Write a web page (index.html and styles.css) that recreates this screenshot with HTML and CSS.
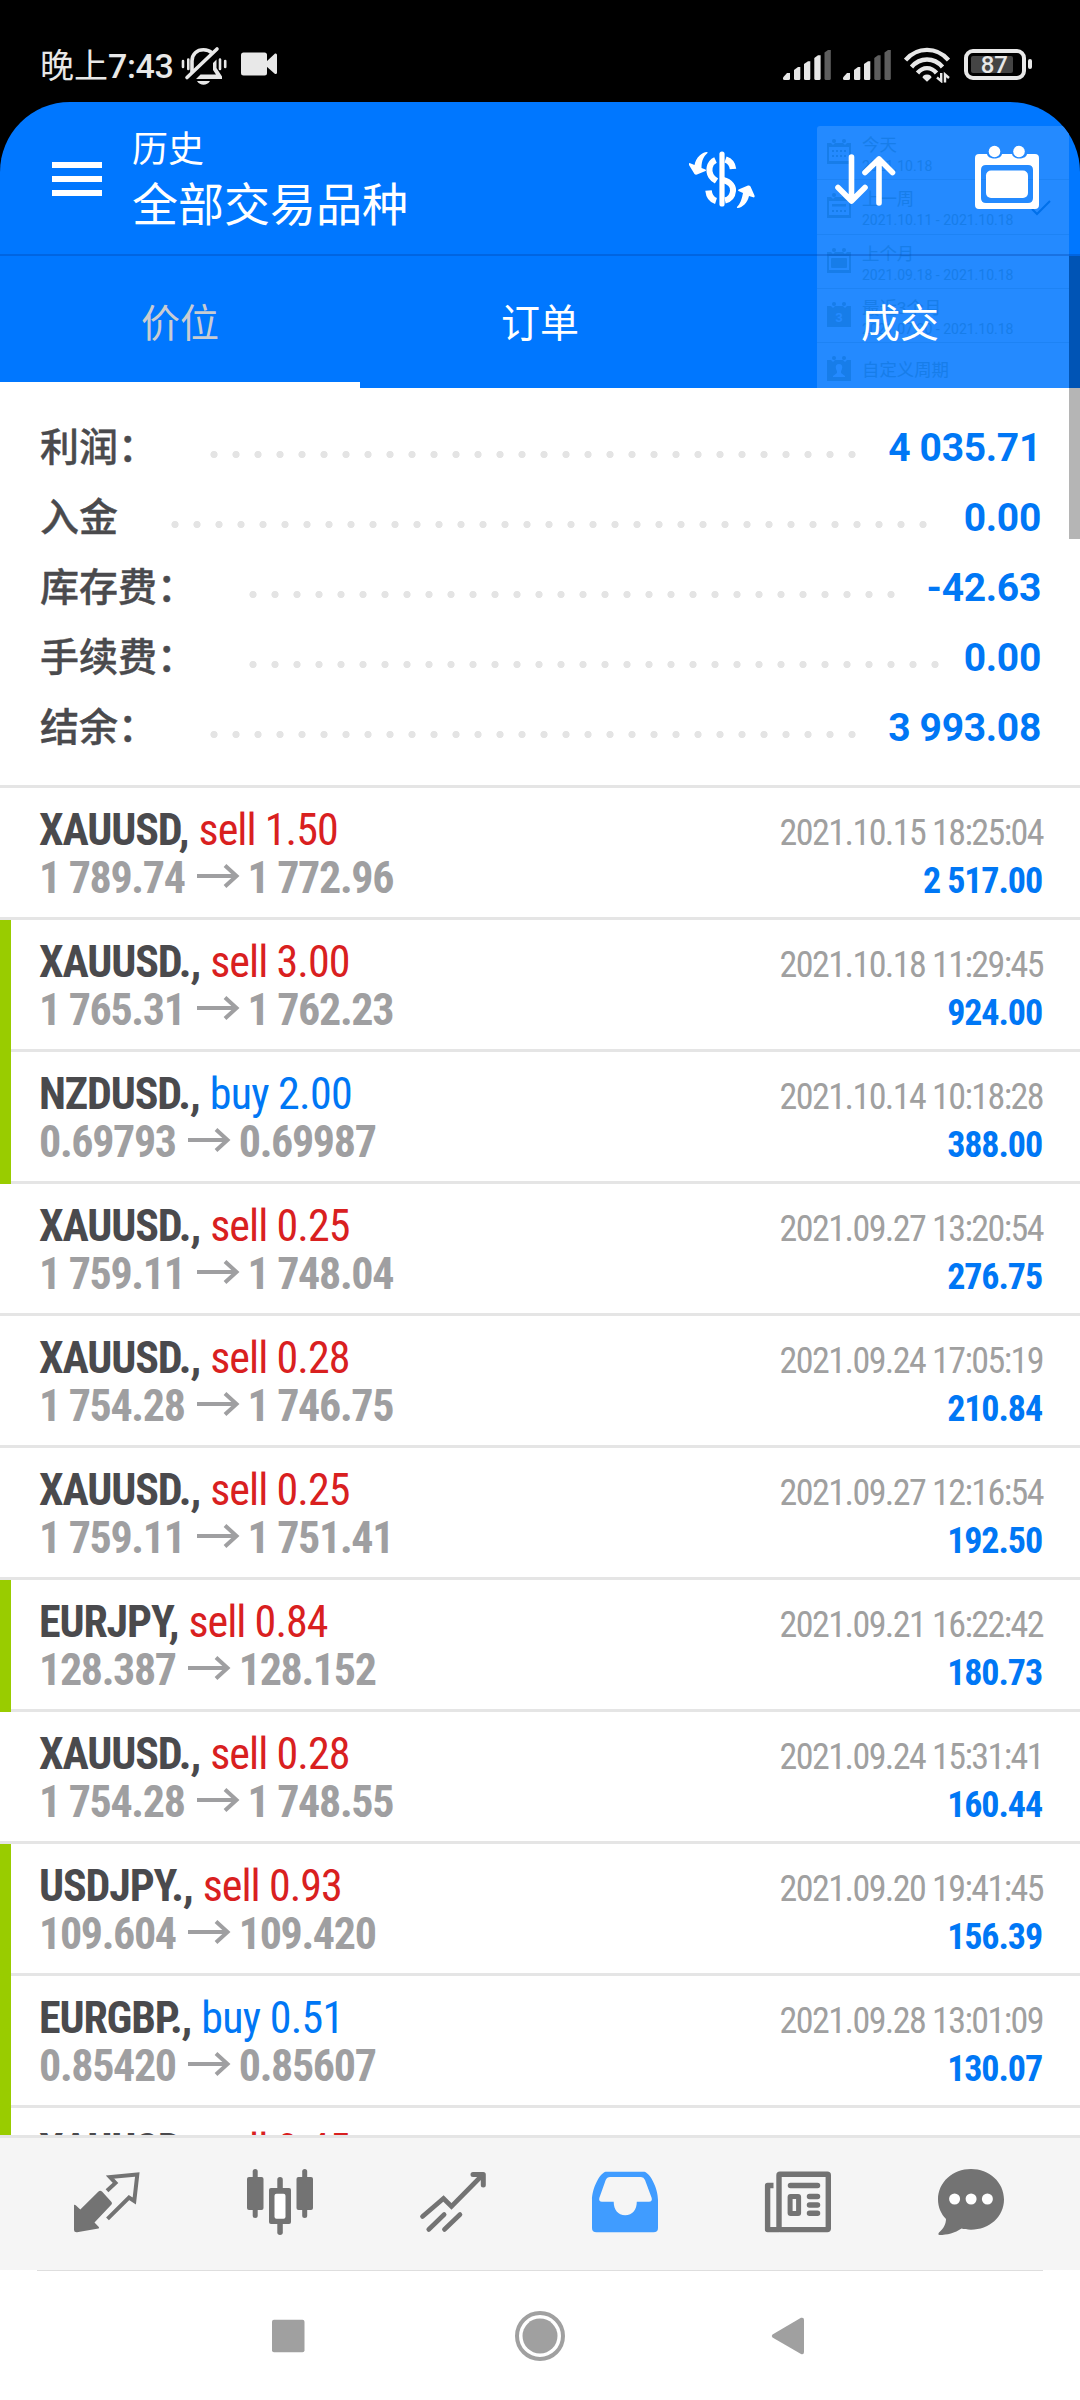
FILE: index.html
```html
<!DOCTYPE html>
<html lang="zh-CN">
<head>
<meta charset="utf-8">
<title>历史</title>
<link rel="stylesheet" href="styles.css">
</head>
<body>
<div class="screen">
  <div class="status-bar">
    <div class="status-left">
      <span class="clock"><span class="daypart">晚上</span>7:43</span>
      <svg class="bell" width="46" height="40" viewBox="0 0 46 40" fill="none" stroke="#e8e8e8">
        <path d="M11 26V15C11 8 16 3.800 22.500 3.800C26.500 3.800 29 5 31 7" stroke-width="3.600"/>
        <path d="M6 31.500L36 3" stroke-width="3.600" stroke-linecap="round"/>
        <path d="M32 17L35.500 13.500V22L41 30.500V33H15L19.500 28.500H35L32 24Z" fill="#e8e8e8" stroke="none"/>
        <path d="M16 35H29C27.500 37.500 25 38.800 22.500 38.800C20 38.800 17.500 37.500 16 35Z" fill="#e8e8e8" stroke="none"/>
        <path d="M2 15V21M7.300 13.500V23M39 13.500V23M44.200 15V21" stroke-width="2.600" stroke-linecap="round"/>
      </svg>
      <svg class="video" width="36" height="24" viewBox="0 0 36 24" fill="#e8e8e8">
        <rect x="0" y="0.500" width="26" height="23" rx="2.500"/>
        <path d="M25 10L34 1.500Q36 1 36 3V20.500Q36 22.500 34 22L25 14Z"/>
      </svg>
    </div>
    <div class="status-right">
      <svg width="48" height="32" viewBox="0 0 48 32" fill="#e8e8e8">
        <path d="M0 28.500L4 24H7V29.500Q7 31 5.500 31H1.500Q0 31 0 29.500Z"/>
        <path d="M11 21L15 18H17.300V29.500Q17.300 31 16 31H12.500Q11 31 11 29.500Z"/>
        <path d="M21 15L25 12.300H27.300V29.500Q27.300 31 26 31H22.500Q21 31 21 29.500Z"/>
        <path d="M31.300 9L35 6.300H37.600V29.500Q37.600 31 36 31H32.800Q31.300 31 31.300 29.500Z"/>
        <path fill="#5e5e5e" d="M41.500 3.500L45 1H47.800V29.500Q47.800 31 46.300 31H43Q41.500 31 41.500 29.500Z"/>
      </svg>
      <svg class="sim2" width="48" height="32" viewBox="0 0 48 32" fill="#e8e8e8">
        <path d="M0 28.500L4 24H7V29.500Q7 31 5.500 31H1.500Q0 31 0 29.500Z"/>
        <path d="M11 21L15 18H17.300V29.500Q17.300 31 16 31H12.500Q11 31 11 29.500Z"/>
        <path d="M21 15L25 12.300H27.300V29.500Q27.300 31 26 31H22.500Q21 31 21 29.500Z"/>
        <path fill="#5e5e5e" d="M31.300 9L35 6.300H37.600V29.500Q37.600 31 36 31H32.800Q31.300 31 31.300 29.500Z"/>
        <path fill="#5e5e5e" d="M41.500 3.500L45 1H47.800V29.500Q47.800 31 46.300 31H43Q41.500 31 41.500 29.500Z"/>
      </svg>
      <svg class="wifi" width="46" height="36" viewBox="0 0 46 36" fill="none" stroke="#e8e8e8" stroke-width="4.400">
        <path d="M1.500 13C13.500 -0.500 32.500 -0.500 44.500 13"/>
        <path d="M7.500 20C16 10 30 10 38.500 20"/>
        <path d="M13.500 26C19 19.500 27 19.500 32.500 26"/>
        <path d="M23 27.500C26 27.500 27.500 29 27.500 30.500L23 34.800L18.500 30.500C18.500 29 20 27.500 23 27.500Z" fill="#e8e8e8" stroke="none"/>
        <path d="M37.200 26V34L33 30.500M41 35.500V27.500L45 31" stroke-width="2.400"/>
      </svg>
      <div class="battery"><span class="charge">87</span></div>
      <div class="battery-tip"></div>
    </div>
  </div>

  <header class="app-header">
    <div class="title-bar">
      <svg class="menu" width="50" height="34" viewBox="0 0 50 34" fill="#fff"><path d="M0 0H50V6H0ZM0 14H50V20H0ZM0 28H50V34H0Z"/></svg>
      <div class="titles">
        <div class="title-small">历史</div>
        <div class="title-large">全部交易品种</div>
      </div>
      <svg class="ic-dollar" width="68" height="60" viewBox="0 0 68 60" fill="none" stroke="#fff">
        <path d="M33 4V54" stroke-width="5.200" stroke-linecap="round"/>
        <path d="M26.500 10C20 13 19 21 22 26C24 29 26 30 27.500 31" stroke-width="6"/>
        <path d="M36.500 9.500C41 11 43.500 14 44 19" stroke-width="6.500"/>
        <path d="M34 30C42 32 44.500 37 44 41C43.500 46 40.500 49.500 36 50.500" stroke-width="6"/>
        <path d="M27 51C22 49.500 20 45 19.500 40.500" stroke-width="6.500"/>
        <path fill="#fff" stroke="none" d="M18 2C13 2.500 7 7 5.500 15L0.500 13Q-0.500 13.500 0 15L5.500 24Q6.500 25 8 24.500L16.500 21Q17.500 20.500 16.500 19.500L12.500 18C12.500 10 15 6 18.500 3Q19 2 18 2Z"/>
        <path fill="#fff" stroke="none" d="M48.500 58C53.500 57.500 58.500 53 60 46L65 47.500Q66 47 65.500 45.500L61.500 36.500Q60.500 35 59 35.500L49.500 39.500Q48.500 40.500 49.500 41L54 43C53 49 51 54 48 57Q47.500 58 48.500 58Z"/>
      </svg>
      <svg class="ic-sort" width="62" height="54" viewBox="0 0 62 54" fill="none" stroke="#fff" stroke-width="5.600" stroke-linecap="round" stroke-linejoin="round">
        <path d="M17.500 4V48M4 34.500L17.500 48L31 34.500M45 50V6M31 19.500L45 6L58.500 19.500"/>
      </svg>
      <svg class="ic-cal" width="64" height="66" viewBox="0 0 64 66" fill="#fff">
        <path fill-rule="evenodd" d="M4 9H12C13 15 26 15 27 9H37C38 15 51 15 52 9H60Q64 9 64 13V60Q64 64 60 64H4Q0 64 0 60V13Q0 9 4 9ZM11 20Q6 20 6 25V53Q6 58 11 58H53Q58 58 58 53V25Q58 20 53 20Z"/>
        <circle cx="19.500" cy="6.500" r="5.800"/><circle cx="44" cy="6.500" r="5.800"/>
        <rect x="11" y="25.500" width="42" height="27.500" rx="5"/>
      </svg>
    </div>
    <nav class="tabs">
      <div class="tab active">价位</div>
      <div class="tab">订单</div>
      <div class="tab">成交</div>
    </nav>
    <div class="period-menu">
      <div class="period">
        <svg width="26" height="26" viewBox="0 0 26 26"><path fill-rule="evenodd" d="M1 4H5L7 6L9 4H17L19 6L21 4H25V25H1ZM3 8V22H23V8Z"/><circle cx="8" cy="2" r="2"/><circle cx="18" cy="2" r="2"/><path fill="none" stroke="currentColor" stroke-width="2" stroke-dasharray="2 2" d="M6 12H21M6 17H21"/></svg>
        <div><b>今天</b><i>2021.10.18</i></div>
      </div>
      <div class="period">
        <svg width="26" height="26" viewBox="0 0 26 26"><path fill-rule="evenodd" d="M1 4H5L7 6L9 4H17L19 6L21 4H25V25H1ZM3 8V22H23V8Z"/><circle cx="8" cy="2" r="2"/><circle cx="18" cy="2" r="2"/><path d="M6 11H20V13.500H6Z"/><path fill="none" stroke="currentColor" stroke-width="2" stroke-dasharray="2 2" d="M6 18H21"/></svg>
        <div><b>上一周</b><i>2021.10.11 - 2021.10.18</i></div>
        <svg class="tick" width="20" height="16" viewBox="0 0 20 16"><path fill="none" stroke="#0070ea" stroke-width="2" d="M1 9L6 14L19 1"/></svg>
      </div>
      <div class="period">
        <svg width="26" height="26" viewBox="0 0 26 26"><path fill-rule="evenodd" d="M1 4H5L7 6L9 4H17L19 6L21 4H25V25H1ZM3 8V22H23V8Z"/><circle cx="8" cy="2" r="2"/><circle cx="18" cy="2" r="2"/><rect x="5" y="10" width="16" height="10" rx="1"/></svg>
        <div><b>上个月</b><i>2021.09.18 - 2021.10.18</i></div>
      </div>
      <div class="period">
        <svg width="26" height="26" viewBox="0 0 26 26"><path d="M1 4H5L7 6L9 4H17L19 6L21 4H25V25H1Z"/><circle cx="8" cy="2" r="2"/><circle cx="18" cy="2" r="2"/><text x="13" y="20" text-anchor="middle" class="cal-num">3</text></svg>
        <div><b>最近3个月</b><i>2021.07.20 - 2021.10.18</i></div>
      </div>
      <div class="period single">
        <svg width="26" height="26" viewBox="0 0 26 26"><path d="M1 4H5L7 6L9 4H17L19 6L21 4H25V25H1Z"/><circle cx="8" cy="2" r="2"/><circle cx="18" cy="2" r="2"/><path fill="#248aff" d="M13 8C18 8 16 14 15 15V17L19 20V21H7V20L11 17V15C10 14 8 8 13 8Z"/></svg>
        <div><b>自定义周期</b></div>
      </div>
    </div>
  </header>

  <section class="summary">
    <div class="sum-row"><span class="label">利润：</span><span class="dots" style="width:660px"></span><span class="value">4 035.71</span></div>
    <div class="sum-row"><span class="label">入金</span><span class="dots" style="width:770px"></span><span class="value">0.00</span></div>
    <div class="sum-row"><span class="label">库存费：</span><span class="dots" style="width:660px"></span><span class="value">-42.63</span></div>
    <div class="sum-row"><span class="label">手续费：</span><span class="dots" style="width:704px"></span><span class="value">0.00</span></div>
    <div class="sum-row"><span class="label">结余：</span><span class="dots" style="width:660px"></span><span class="value">3 993.08</span></div>
  </section>

  <main class="deals">
    <article class="deal"><div class="line"><p><b class="sym">XAUUSD,</b> <span class="sell">sell 1.50</span></p><time>2021.10.15 18:25:04</time></div><div class="line"><p class="price">1 789.74<svg class="arrow"><use href="#arrow"/></svg>1 772.96</p><b class="profit">2 517.00</b></div></article>
    <article class="deal marked"><div class="line"><p><b class="sym">XAUUSD.,</b> <span class="sell">sell 3.00</span></p><time>2021.10.18 11:29:45</time></div><div class="line"><p class="price">1 765.31<svg class="arrow"><use href="#arrow"/></svg>1 762.23</p><b class="profit">924.00</b></div></article>
    <article class="deal marked"><div class="line"><p><b class="sym">NZDUSD.,</b> <span class="buy">buy 2.00</span></p><time>2021.10.14 10:18:28</time></div><div class="line"><p class="price">0.69793<svg class="arrow"><use href="#arrow"/></svg>0.69987</p><b class="profit">388.00</b></div></article>
    <article class="deal"><div class="line"><p><b class="sym">XAUUSD.,</b> <span class="sell">sell 0.25</span></p><time>2021.09.27 13:20:54</time></div><div class="line"><p class="price">1 759.11<svg class="arrow"><use href="#arrow"/></svg>1 748.04</p><b class="profit">276.75</b></div></article>
    <article class="deal"><div class="line"><p><b class="sym">XAUUSD.,</b> <span class="sell">sell 0.28</span></p><time>2021.09.24 17:05:19</time></div><div class="line"><p class="price">1 754.28<svg class="arrow"><use href="#arrow"/></svg>1 746.75</p><b class="profit">210.84</b></div></article>
    <article class="deal"><div class="line"><p><b class="sym">XAUUSD.,</b> <span class="sell">sell 0.25</span></p><time>2021.09.27 12:16:54</time></div><div class="line"><p class="price">1 759.11<svg class="arrow"><use href="#arrow"/></svg>1 751.41</p><b class="profit">192.50</b></div></article>
    <article class="deal marked"><div class="line"><p><b class="sym">EURJPY,</b> <span class="sell">sell 0.84</span></p><time>2021.09.21 16:22:42</time></div><div class="line"><p class="price">128.387<svg class="arrow"><use href="#arrow"/></svg>128.152</p><b class="profit">180.73</b></div></article>
    <article class="deal"><div class="line"><p><b class="sym">XAUUSD.,</b> <span class="sell">sell 0.28</span></p><time>2021.09.24 15:31:41</time></div><div class="line"><p class="price">1 754.28<svg class="arrow"><use href="#arrow"/></svg>1 748.55</p><b class="profit">160.44</b></div></article>
    <article class="deal marked"><div class="line"><p><b class="sym">USDJPY.,</b> <span class="sell">sell 0.93</span></p><time>2021.09.20 19:41:45</time></div><div class="line"><p class="price">109.604<svg class="arrow"><use href="#arrow"/></svg>109.420</p><b class="profit">156.39</b></div></article>
    <article class="deal marked"><div class="line"><p><b class="sym">EURGBP.,</b> <span class="buy">buy 0.51</span></p><time>2021.09.28 13:01:09</time></div><div class="line"><p class="price">0.85420<svg class="arrow"><use href="#arrow"/></svg>0.85607</p><b class="profit">130.07</b></div></article>
    <article class="deal marked"><div class="line"><p><b class="sym">XAUUSD.,</b> <span class="sell">sell 0.45</span></p></div></article>
  </main>

  <nav class="bottom-nav">
    <div class="item"><svg width="72" height="72" viewBox="0 0 72 72" fill="#737373"><path d="M3 39Q4 38.500 5 39.500L9.300 43.500L27.500 25.500Q29 24 31 25.500L40.500 36Q41.500 37.300 40.500 38.500L23.500 56.500L27.800 61Q28.500 62 27.500 62.500L6 66.300Q3 66.500 3 64Z"/><path fill="none" stroke="#737373" stroke-width="4" d="M36 24.800L44.500 17L39 11L66.300 8.500L63.300 35L58 31.500L36.500 52.800"/></svg></div>
    <div class="item"><svg width="72" height="72" viewBox="0 0 72 72" fill="#737373"><rect x="3" y="11" width="16.500" height="33" rx="2"/><rect x="8.700" y="3" width="5" height="49" rx="2.500"/><rect x="52.500" y="11" width="16.500" height="33" rx="2"/><rect x="58.200" y="3" width="5" height="49" rx="2.500"/><rect x="33.300" y="11" width="5.500" height="58" rx="2.700"/><rect x="25" y="22" width="22" height="36" rx="2"/><rect x="30.500" y="27.700" width="11" height="25" rx="2" fill="#fff"/></svg></div>
    <div class="item"><svg width="72" height="72" viewBox="0 0 72 72" fill="none" stroke="#737373" stroke-width="5" stroke-linecap="round"><path d="M5.500 50.500L26.500 32.500L34.500 40.500L64.500 10" stroke-width="4.700"/><path d="M56 8.500H66.300V19" stroke-linejoin="round"/><path d="M11.700 63.500L27.200 48.500M27.400 63.500L43 48.500" stroke-width="4.600"/></svg></div>
    <div class="item"><svg width="72" height="72" viewBox="0 0 72 72" fill="#409cff"><path fill-rule="evenodd" d="M16.500 5.700H55.500C62 8 69 23 69 34V62Q69 66.300 64.500 66.300H7.500Q3 66.300 3 62V34C3 23 10 8 16.500 5.700ZM21 11Q18 11 16.700 14L10.300 32Q9.500 35.700 13 35.700H24.700C24.700 43.500 29 49.300 36.200 49.300C43.500 49.300 47.800 43.500 47.800 35.700H60Q63.500 35.700 62.700 32L56 14Q54.700 11 52 11Z"/></svg></div>
    <div class="item"><svg width="72" height="72" viewBox="0 0 72 72" fill="none" stroke="#737373" stroke-width="5.400"><rect x="17" y="8.300" width="49.300" height="55.300" rx="1"/><path d="M11.500 19.500H5.600V63.600H17" stroke-linejoin="round"/><path d="M28.500 19.500H55.500M47.500 30.500H55.500M47.500 39H55.500M47.500 47.200H55.500" stroke-linecap="round" stroke-width="5.500"/><rect x="28.100" y="30.500" width="8.500" height="17" rx="0.500" stroke-width="5"/></svg></div>
    <div class="item"><svg width="72" height="72" viewBox="0 0 72 72" fill="#737373"><path d="M36 3C54 3 69 16 69 33.500C69 51 54 63.700 36 63.700C32 63.700 29 63.300 26.500 62.500C20 67 12 69 4.500 69Q2.500 68.500 4 66.500C8.500 63 11 58 11 53C6 48 3 41 3 33.500C3 16 18 3 36 3Z"/><g fill="#fff"><circle cx="19.600" cy="33" r="5.500"/><circle cx="36.100" cy="33" r="5.500"/><circle cx="52.400" cy="33" r="5.500"/></g></svg></div>
  </nav>
  <div class="nav-rule"></div>
  <div class="system-nav">
    <svg width="50" height="50" viewBox="0 0 50 50" fill="#a0a0a0"><rect x="9" y="8.700" width="32.500" height="32.500" rx="2"/></svg>
    <svg class="home" width="52" height="52" viewBox="0 0 52 52"><circle cx="26" cy="26" r="23" fill="none" stroke="#a0a0a0" stroke-width="4"/><circle cx="26" cy="26" r="17.500" fill="#a0a0a0"/></svg>
    <svg width="50" height="50" viewBox="0 0 50 50" fill="#a0a0a0"><path d="M9.500 23.500L38 6.800Q41 6 41 9V41Q41 44 38 43L9.500 26.500Q8 25 9.500 23.500Z"/></svg>
  </div>
  <div class="scrollbar"></div>
</div>
<svg class="defs" width="0" height="0"><symbol id="arrow" viewBox="0 0 44 24"><path fill="none" stroke="#9f9fa1" stroke-width="4" d="M1 12H41M29 1.500L40.500 12L29 22.500"/></symbol></svg>
</body>
</html>
```
FILE: styles.css
```css
* { box-sizing: border-box; margin: 0; padding: 0; }
body {
  width: 1080px;
  height: 2400px;
  overflow: hidden;
  background: #000;
  font-family: Roboto, "Noto Sans CJK SC", sans-serif;
}
svg { display: block; flex: none; }
.defs { position: absolute; }
.screen { position: relative; width: 1080px; height: 2400px; display: flex; flex-direction: column; }

/* status bar */
.status-bar { height: 102px; display: flex; justify-content: space-between; padding: 46px 48px 0 40px; color: #e8e8e8; }
.status-left, .status-right { display: flex; align-items: flex-start; }
.clock { font-size: 34px; line-height: 40px; font-weight: 500; width: 141px; white-space: nowrap; letter-spacing: -.4px; }
.daypart { font-weight: 400; letter-spacing: 0; }
.video { margin: 6px 0 0 14px; }
.status-right { padding-top: 3px; }
.sim2 { margin-left: 12px; }
.wifi { margin: -2px 0 0 13px; }
.battery { margin-left: 14px; width: 62px; height: 31px; border: 4px solid #e8e8e8; border-radius: 9px; padding: 3px; }
.charge { display: block; width: 42px; height: 17px; line-height: 18px; background: #444; border-radius: 2px; font-size: 24px; font-weight: 500; text-align: right; padding-right: 5px; }
.battery-tip { width: 4px; height: 10px; margin: 10px 0 0 2px; border-radius: 2px; background: #e8e8e8; }

/* header */
.app-header { position: relative; height: 286px; background: #07f; border-radius: 70px 70px 0 0; color: #fff; overflow: hidden; }
.title-bar { position: relative; z-index: 2; height: 154px; display: flex; padding-left: 52px; border-bottom: 2px solid rgba(0, 60, 160, .3); }
.menu { margin-top: 60px; }
.titles { margin-left: 30px; width: 557px; padding-top: 23px; }
.title-small { font-size: 36px; line-height: 50px; }
.title-large { font-size: 46px; line-height: 61px; }
.ic-dollar { margin-top: 48px; }
.ic-sort { margin: 51px 0 0 77px; }
.ic-cal { margin: 43px 0 0 79px; }
.tabs { position: relative; z-index: 2; height: 132px; display: flex; }
.tab { flex: 1; text-align: center; font-size: 39px; line-height: 137px; }
.tab.active { color: #c8ccd2; border-bottom: 6px solid #fff; }
.period-menu { position: absolute; left: 817px; top: 24px; width: 252px; height: 262px; z-index: 1; background: #248aff; color: #177de9; border-radius: 3px 3px 0 0; overflow: hidden; }
.period { height: 54.300px; display: flex; padding: 13px 0 0 9px; border-bottom: 1px solid #1d83f5; }
.period > svg { fill: currentColor; }
.period > div { margin: -5px 0 0 10px; }
.period b, .period i { display: block; font-style: normal; font-weight: 400; white-space: nowrap; }
.period b { font-size: 17.400px; line-height: 22px; }
.period i { font-size: 14px; line-height: 21px; }
.period .tick { margin: 7px 0 0 18px; }
.period.single > div { margin-top: 3px; }
.cal-num { font-size: 13px; font-weight: 700; fill: #248aff; }

/* account summary */
.summary { height: 400px; padding: 23px 40px 0; background: #fff; border-bottom: 3px solid #e5e5e5; }
.sum-row { height: 70px; display: flex; line-height: 74px; font-size: 39px; }
.label { color: #4a4a4d; font-weight: 500; margin-right: 46px; -webkit-text-stroke: .4px #4a4a4d; }
.dots { height: 70px; background: radial-gradient(circle at 11px 43.500px, #e4e4e4 3.200px, transparent 4px) 0 0 / 22px 70px repeat-x; }
.value { margin-left: auto; margin-right: -1px; color: #0077f5; font-weight: 700; letter-spacing: -.3px; }

/* deals */
.deals { height: 1347px; background: #fff; overflow: hidden; font-stretch: 75%; font-family: "Roboto Condensed", Roboto, sans-serif; }
.deal { position: relative; height: 132px; padding: 18px 39px 0 39px; border-bottom: 3px solid #e5e5e5; }
.deal.marked::before { content: ""; position: absolute; left: 0; top: 0; width: 11px; height: 132px; background: #9c0; }
.line { display: flex; justify-content: space-between; align-items: baseline; height: 48px; line-height: 48px; font-size: 44px; white-space: nowrap; }
.sym { color: #4a4a4d; letter-spacing: -1.150px; }
.sell { color: #d9201f; letter-spacing: -.95px; }
.buy { color: #0077f5; letter-spacing: -.75px; }
.price { color: #9f9fa1; font-weight: 700; letter-spacing: -1.350px; }
.arrow { display: inline-block; width: 44px; height: 24px; margin: 0 8px 0 11px; vertical-align: 5px; }
.line time { font-size: 36px; font-weight: 400; color: #a0a0a0; letter-spacing: -1.550px; margin-right: -2px; }
.profit { font-size: 36px; color: #0077f5; letter-spacing: -1.100px; margin-right: -1px; }

/* bottom navigation */
.bottom-nav { height: 135px; border-top: 3px solid #e5e5e5; background: #f5f5f5; display: flex; padding: 28px 23px 0 21px; }
.item { flex: 1; display: flex; justify-content: center; }
.nav-rule { height: 1px; border: solid #fff; border-width: 0 37px; background: #dedede; }
.system-nav { flex: 1; background: #fff; display: flex; justify-content: space-between; align-items: center; padding: 0 267px 0 263px; }
.home { margin-left: 4px; }
.scrollbar { position: absolute; right: 0; top: 256px; width: 11px; height: 283px; background: rgba(0, 0, 0, .29); z-index: 3; }
```
